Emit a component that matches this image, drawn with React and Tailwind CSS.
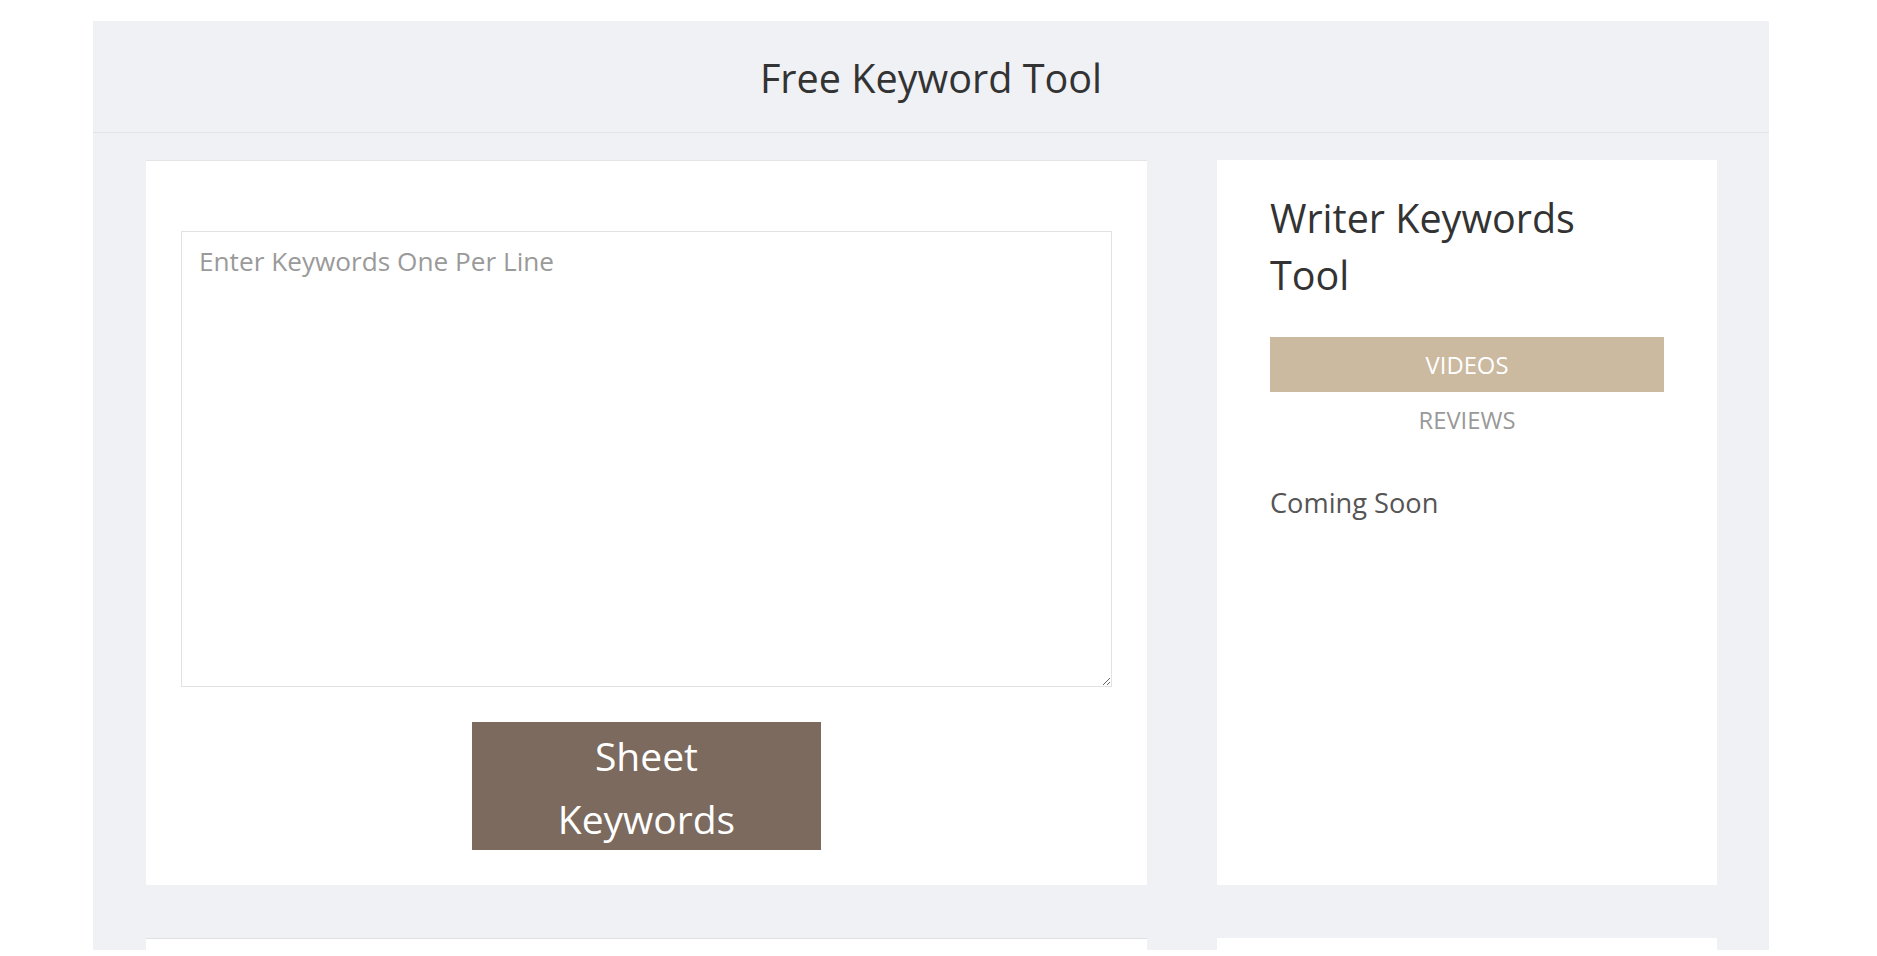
export default function App() {
  return (
    <div
      className="min-h-screen bg-white pt-[21px]"
      style={{ fontFamily: '"Open Sans", "Noto Sans", sans-serif' }}
    >
      <div className="ml-[93px] w-[1676px] h-[929px] overflow-hidden bg-[#f0f1f5]">
        <div className="h-[112px] border-b border-[#e3e4e8] flex items-center justify-center">
          <h1 className="text-[39.6px] leading-none text-[#333333] font-normal mt-[4px]">Free Keyword Tool</h1>
        </div>
        <div className="pt-[27px] pl-[53px] grid grid-cols-[1001px_500px] gap-x-[70px] gap-y-[53px]">
          <div className="bg-white border-t border-[#e4e4e6] h-[725px] px-[35px] pt-[70px] flex flex-col items-center">
            <textarea
              className="w-full h-[456px] border border-[#e2e2e2] px-[17px] py-[10px] text-[26.2px] leading-[38px] text-[#555] placeholder:text-[#9a9a9a] outline-none"
              placeholder="Enter Keywords One Per Line"
            />
            <button className="mt-[35px] w-[349px] h-[128px] bg-[#7b6a5d] text-white text-[39px] leading-[63px] flex flex-col items-center justify-center pt-[1px]">
              <span>Sheet</span>
              <span>Keywords</span>
            </button>
          </div>
          <div className="bg-white h-[725px] px-[53px] pt-[30px]">
            <h2 className="text-[39.5px] leading-[57px] text-[#333333] font-normal">
              Writer Keywords
              <br />
              Tool
            </h2>
            <div className="mt-[33px]">
              <div className="h-[55px] bg-[#cbb9a0] text-white text-[23.8px] flex items-center justify-center pt-[3px]">
                VIDEOS
              </div>
              <div className="h-[55px] text-[#999999] text-[23.8px] flex items-center justify-center pt-[3px]">
                REVIEWS
              </div>
            </div>
            <p className="mt-[36px] text-[27.2px] leading-[40px] text-[#555555]">Coming Soon</p>
          </div>
          <div className="bg-white border-t border-[#e0e0e2] h-[300px]" />
          <div className="bg-white h-[300px]" />
        </div>
      </div>
    </div>
  );
}
